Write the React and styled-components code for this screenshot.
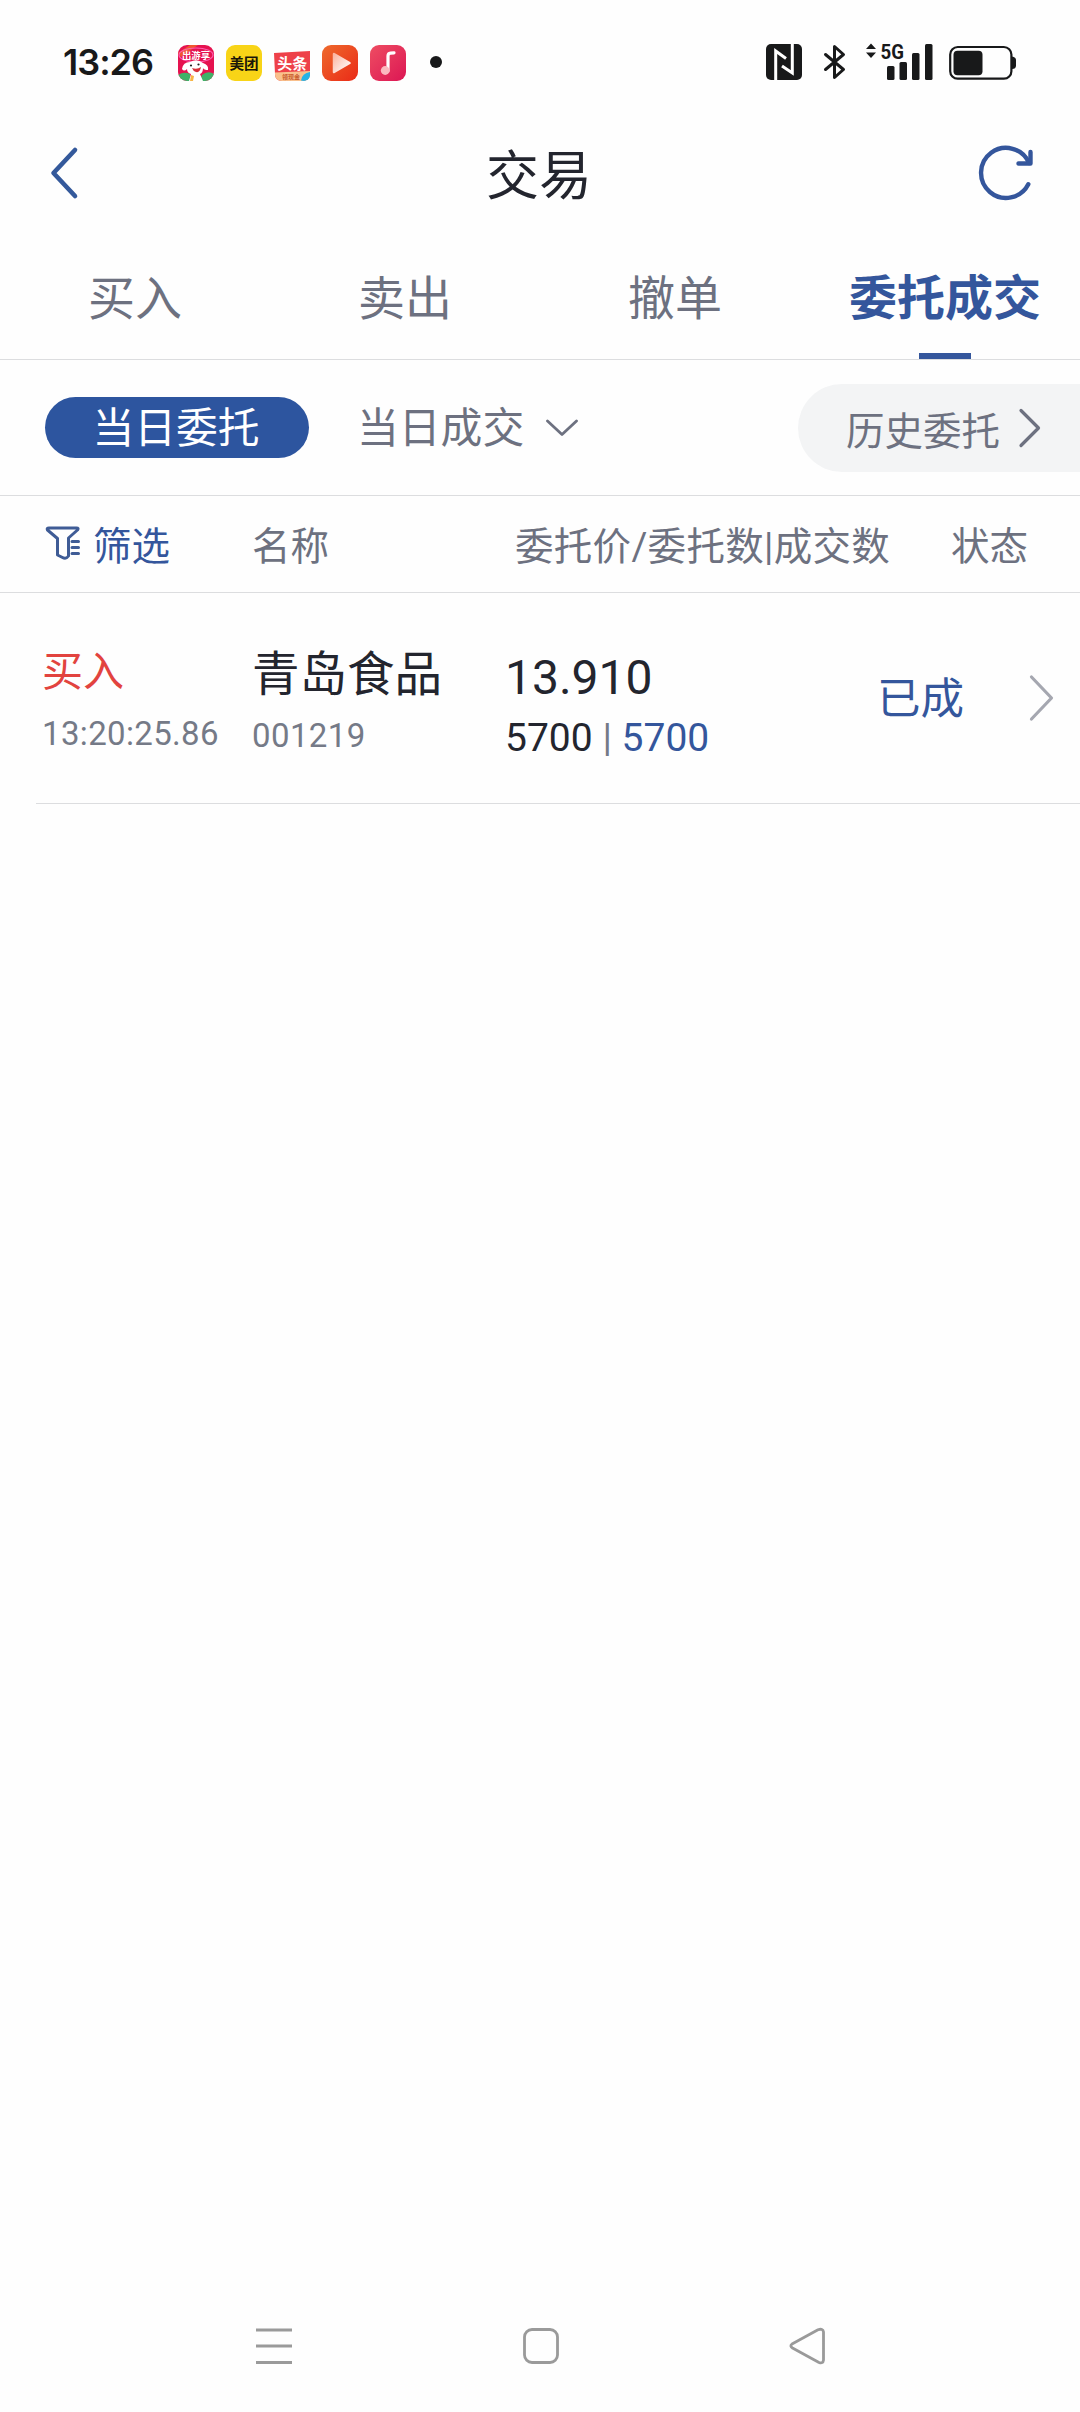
import React from 'react'
import styled, { createGlobalStyle } from 'styled-components'

const tabs = ['买入', '卖出', '撤单', '委托成交']

const orders = [
    {
        side: '买入',
        time: '13:20:25.86',
        name: '青岛食品',
        code: '001219',
        price: '13.910',
        amount: '5700',
        filled: '5700',
        status: '已成',
    },
]

function StatusBar() {
    return (
        <Status>
            <Clock>13:26</Clock>
            <AppIcons>
                <AppIcon viewBox="0 0 36 36">
                    <defs>
                        <clipPath id="tripClip"><rect width="36" height="36" rx="9" /></clipPath>
                    </defs>
                    <g clipPath="url(#tripClip)">
                        <rect width="36" height="36" fill="#e5124f" />
                        <path d="M0 8 L12 0 L20 0 L3 12Z" fill="#f0562f" />
                        <ellipse cx="18" cy="10" rx="17" ry="7" fill="none" stroke="#ff5cae" strokeWidth="1.2" />
                        <path d="M0 30 Q6 26 12 29 L12 36 L0 36Z" fill="#3fb268" />
                        <path d="M24 30 Q30 25 36 29 L36 36 L22 36Z" fill="#3fb268" />
                        <path d="M4 24 Q5 17 12 17 Q19 13 25 18 Q31 20 30 25 Q26 25 25 23 Q25 28 22 29 L25 36 L11 36 L13 29 Q9 28 9 24 Q6 27 4 24Z" fill="#fff" />
                        <path d="M14 23 Q19 25 23 22 Q22 28 18 27 Q15 26 14 23Z" fill="#d92f38" />
                        <circle cx="13" cy="20.5" r="1.1" fill="#222" />
                        <circle cx="20.5" cy="19.5" r="1.1" fill="#222" />
                        <path d="M12 36 L13 30 L16 31 L15 36Z" fill="#f7b545" />
                    </g>
                    <IconText x="18" y="14" fontSize="9.4" fill="#fff">出游享</IconText>
                </AppIcon>
                <AppIcon viewBox="0 0 36 36">
                    <rect width="36" height="36" rx="9" fill="#f8d417" />
                    <IconText x="18" y="23.5" fontSize="14.6" fill="#1a1709">美团</IconText>
                </AppIcon>
                <AppIcon viewBox="0 0 36 36">
                    <path d="M0 8 L36 6 L36 29 Q36 36 28 36 L8 36 Q1 36 1 29Z" fill="#ee4149" />
                    <path d="M1 27.5 L36 26 L36 29 Q36 36 28 36 L8 36 Q1 36 1 29Z" fill="#f9c08c" />
                    <path d="M27 35.5 Q28 28 36 27 Q37 35 30 36Z" fill="#25b3e6" />
                    <IconText x="18.2" y="23.6" fontSize="15" fill="#fff">头条</IconText>
                    <IconText x="17" y="34.3" fontSize="6" fill="#c85a2c">领现金</IconText>
                </AppIcon>
                <AppIcon viewBox="0 0 36 36">
                    <defs>
                        <linearGradient id="videoFill" x1="0" y1="0" x2="1" y2="1">
                            <stop offset="0" stopColor="#ee6a2c" />
                            <stop offset="1" stopColor="#ea2a17" />
                        </linearGradient>
                        <linearGradient id="playFill" x1="0" y1="0" x2="1" y2="1">
                            <stop offset="0" stopColor="#fbb5a0" />
                            <stop offset="1" stopColor="#fff" />
                        </linearGradient>
                    </defs>
                    <rect width="36" height="36" rx="9" fill="url(#videoFill)" />
                    <path d="M12 9 L27.500 18 L12 27Z" fill="url(#playFill)" stroke="url(#playFill)" strokeWidth="2.5" strokeLinejoin="round" />
                </AppIcon>
                <AppIcon viewBox="0 0 36 36">
                    <defs>
                        <linearGradient id="musicFill" x1="0" y1="0" x2="1" y2="1">
                            <stop offset="0" stopColor="#ee4d62" />
                            <stop offset="1" stopColor="#dc1654" />
                        </linearGradient>
                    </defs>
                    <rect width="36" height="36" rx="9" fill="url(#musicFill)" />
                    <path d="M18 26 V11 Q18 8.500 20.500 8.200 L24 7.800" fill="none" stroke="#fff" strokeWidth="3.200" strokeLinecap="round" />
                    <circle cx="15.200" cy="25.500" r="4.400" fill="#fbb9bf" />
                </AppIcon>
            </AppIcons>
            <MoreDot />
            <SystemIcons viewBox="0 -10 252 60">
                <rect x="0" y="2" width="36" height="36" rx="5" fill="#18191a" />
                <path d="M9.700 38 V9 L20 16.500 M26.300 2 V31 L16 24" fill="none" stroke="#fff" strokeWidth="3" />
                <path d="M59.500 12.500 L77.500 27.500 L68.500 35.500 V4.500 L77.500 12.500 L59.500 27.500" fill="none" stroke="#18191a" strokeWidth="3" strokeLinejoin="round" strokeLinecap="round" />
                <path d="M100 7 L105 1.500 L110 7Z M100 10.500 L105 16 L110 10.500Z" fill="#18191a" />
                <NetText x="114.500" y="16.700" textLength="23.500" lengthAdjust="spacingAndGlyphs">5G</NetText>
                <rect x="121" y="24" width="7.500" height="14" rx="1.500" fill="#18191a" />
                <rect x="133.500" y="20" width="7.500" height="18" rx="1.500" fill="#18191a" />
                <rect x="146" y="11" width="7.500" height="27" rx="1.500" fill="#18191a" />
                <rect x="159" y="2" width="7.500" height="36" rx="1.500" fill="#18191a" />
                <rect x="184.200" y="5" width="61.200" height="31.700" rx="7.500" fill="none" stroke="#18191a" strokeWidth="2.200" />
                <rect x="187.500" y="8.700" width="29" height="24.500" rx="4" fill="#18191a" />
                <path d="M246 14.500 Q250 15 250 18 V23.500 Q250 27 246 27Z" fill="#18191a" />
            </SystemIcons>
        </Status>
    )
}

function App() {
    return (
        <Screen>
            <GlobalStyle />
            <StatusBar />
            <Header>
                <BackIcon viewBox="0 0 32 54">
                    <path d="M27 4 L5.500 27 L27 50" />
                </BackIcon>
                <Title>交易</Title>
                <RefreshIcon viewBox="0 0 56 56">
                    <path d="M50.300 39.300 A25 25 0 1 1 51 18" />
                    <path d="M40.500 18.500 H52.500 V7" />
                </RefreshIcon>
            </Header>
            <Tabs>
                {tabs.map(tab => (
                    <Tab key={tab} $active={tab === '委托成交'}>{tab}</Tab>
                ))}
            </Tabs>
            <FilterBar>
                <TodayOrders>当日委托</TodayOrders>
                <TodayDeals>
                    当日成交
                    <DownIcon viewBox="0 0 32 18">
                        <path d="M1.500 2 L16 15.500 L30.500 2" />
                    </DownIcon>
                </TodayDeals>
                <History>
                    <HistoryText>历史委托</HistoryText>
                    <RightIcon viewBox="0 0 24 40" $width={24} $height={40} $color="#6d7180">
                        <path d="M3 2.500 L20.500 20 L3 37.500" />
                    </RightIcon>
                </History>
            </FilterBar>
            <TableHead>
                <FilterButton>
                    <FunnelIcon viewBox="0 0 36 36">
                        <path d="M4 3 H31.500 Q34 3 32.500 5 L23.500 13 V31 Q21 34.500 17.500 32.500 L12.500 30 V13.500 L2.500 5 Q1.500 3 4 3Z" />
                        <path d="M27 16.500 H33.500 M27 22.500 H33.500 M27 28.500 H33.500" />
                    </FunnelIcon>
                    筛选
                </FilterButton>
                <span>名称</span>
                <PriceHead>委托价/委托数|成交数</PriceHead>
                <span>状态</span>
            </TableHead>
            {orders.map(order => (
                <Row key={order.time}>
                    <Cell>
                        <Side>{order.side}</Side>
                        <Time>{order.time}</Time>
                    </Cell>
                    <Cell>
                        <Name>{order.name}</Name>
                        <Code>{order.code}</Code>
                    </Cell>
                    <Cell>
                        <Price>{order.price}</Price>
                        <Amount>
                            {order.amount} <Bar>|</Bar> <Filled>{order.filled}</Filled>
                        </Amount>
                    </Cell>
                    <State>{order.status}</State>
                    <RightIcon viewBox="0 0 26 48" $width={26} $height={48} $color="#a5a7b0">
                        <path d="M3.500 3 L23.500 24 L3.500 45" />
                    </RightIcon>
                </Row>
            ))}
            <NavBar>
                <NavIcon viewBox="0 0 40 40">
                    <path d="M2 4 H38 M2 20 H38 M2 36.500 H38" />
                </NavIcon>
                <NavIcon viewBox="0 0 40 40">
                    <rect x="3.500" y="3.500" width="33" height="33" rx="7.500" />
                </NavIcon>
                <NavIcon viewBox="0 0 40 40">
                    <path d="M4 18 L30 3.800 Q35 2 35.500 6 V34 Q35 38 31 36.500 L4.500 22 Q1.500 20 4 18Z" />
                </NavIcon>
            </NavBar>
        </Screen>
    )
}

export default App

const GlobalStyle = createGlobalStyle`
body {
    margin: 0;
    background: #fefefe;
}
* {
    box-sizing: border-box;
}
`

const Screen = styled.div`
display: flex;
flex-direction: column;
width: 1080px;
height: 2412px;
overflow: hidden;
background: #fefefe;
color: #23252e;
font-family: Roboto, "Noto Sans CJK SC", sans-serif;
white-space: nowrap;
`

const Status = styled.div`
display: flex;
align-items: center;
height: 124px;
padding: 0 62px 0 62px;
`

const Clock = styled.div`
width: 116px;
padding-left: 1px;
font-family: Inter, sans-serif;
font-size: 36px;
font-weight: 600;
line-height: 44px;
letter-spacing: -1px;
color: #18191a;
`

const AppIcons = styled.div`
display: flex;
gap: 12px;
margin-top: 2px;
`

const AppIcon = styled.svg`
width: 36px;
height: 36px;
`

const IconText = styled.text`
font-family: "Noto Sans CJK SC", sans-serif;
font-weight: 700;
text-anchor: middle;
`

const NetText = styled.text`
font-family: Roboto, sans-serif;
font-size: 21px;
font-weight: 700;
fill: #18191a;
`

const MoreDot = styled.div`
width: 12px;
height: 12px;
margin-left: 24px;
border-radius: 50%;
background: #18191a;
`

const SystemIcons = styled.svg`
width: 252px;
height: 60px;
margin-left: auto;
`

const Header = styled.div`
display: flex;
justify-content: space-between;
align-items: center;
height: 98px;
padding: 0 46px 0 48px;
`

const BackIcon = styled.svg`
width: 32px;
height: 54px;
margin-right: 20px;
fill: none;
stroke: #34599b;
stroke-width: 4.6;
stroke-linecap: round;
stroke-linejoin: round;
`

const Title = styled.div`
padding-top: 8px;
font-size: 53px;
line-height: 60px;
`

const RefreshIcon = styled.svg`
width: 56px;
height: 56px;
fill: none;
stroke: #34569c;
stroke-width: 4.4;
stroke-linecap: round;
stroke-linejoin: round;
`

const Tabs = styled.div`
display: grid;
grid-template-columns: repeat(4, 1fr);
height: 138px;
border-bottom: 1px solid #dcdddf;
`

const Tab = styled.div`
display: flex;
flex-direction: column;
align-items: center;
justify-content: space-between;
padding-top: 47px;
font-size: ${props => props.$active ? 48 : 47}px;
line-height: 60px;
font-weight: ${props => props.$active ? 700 : 400};
color: ${props => props.$active ? '#34569c' : '#6d7180'};

&::after {
    content: "";
    width: 52px;
    height: 6px;
    background: ${props => props.$active ? '#34569c' : 'transparent'};
}
`

const FilterBar = styled.div`
display: flex;
align-items: center;
height: 136px;
padding-left: 45px;
border-bottom: 1px solid #dcdddf;
font-size: 41.800px;
color: #6d7180;
`

const TodayOrders = styled.div`
width: 264px;
height: 61px;
padding-right: 2px;
border-radius: 31px;
background: #2d559f;
color: #fff;
text-align: center;
line-height: 63px;
`

const TodayDeals = styled.div`
display: flex;
align-items: center;
gap: 22px;
margin-left: 48px;
padding-top: 2px;
line-height: 63px;
`

const DownIcon = styled.svg`
width: 32px;
height: 18px;
margin-top: -2px;
fill: none;
stroke: #6d7180;
stroke-width: 2.8;
stroke-linecap: round;
stroke-linejoin: round;
`

const History = styled.div`
display: flex;
align-items: center;
justify-content: space-between;
width: 282px;
height: 88px;
margin-left: auto;
padding: 0 38px 0 48px;
border-radius: 44px 0 0 44px;
background: #f3f4f5;
font-size: 38.500px;
`

const HistoryText = styled.div`
padding-top: 1px;
`

const RightIcon = styled.svg`
width: ${props => props.$width}px;
height: ${props => props.$height}px;
fill: none;
stroke: ${props => props.$color};
stroke-width: 3.2;
stroke-linecap: round;
stroke-linejoin: round;
`

const TableHead = styled.div`
display: grid;
grid-template-columns: 207px 263px 436px auto;
align-items: center;
height: 97px;
padding: 0 0 2px 45px;
border-bottom: 1px solid #dcdddf;
font-size: 38.500px;
color: #6d7180;
`

const FilterButton = styled.div`
display: flex;
align-items: center;
gap: 12px;
color: #34569c;
`

const FunnelIcon = styled.svg`
width: 36px;
height: 36px;
fill: none;
stroke: #3f5c96;
stroke-width: 3;
stroke-linecap: round;
stroke-linejoin: round;
`

const PriceHead = styled.div`
letter-spacing: 0.3px;
`

const Row = styled.div`
display: grid;
grid-template-columns: 210px 253px 372px 151px auto;
align-items: center;
height: 211px;
margin-left: 36px;
padding: 0 25px 0 6px;
border-bottom: 1px solid #dcdddf;
`

const Cell = styled.div`
display: flex;
flex-direction: column;
height: 130px;
`

const Side = styled.div`
padding-top: 9px;
font-size: 41px;
line-height: 60px;
color: #e2433f;
`

const Time = styled.div`
padding-top: 2px;
font-size: 33px;
line-height: 60px;
letter-spacing: 0.350px;
color: #757a87;
`

const Name = styled.div`
padding-top: 12px;
font-size: 47.500px;
line-height: 60px;
`

const Code = styled.div`
padding-top: 1px;
font-size: 33px;
line-height: 60px;
letter-spacing: 0.400px;
color: #757a87;
`

const Price = styled.div`
padding-top: 15px;
font-size: 48px;
line-height: 60px;
`

const Amount = styled.div`
font-size: 39px;
line-height: 60px;
`

const Bar = styled.span`
color: #757a87;
`

const Filled = styled.span`
color: #34569c;
`

const State = styled.div`
padding-top: 4px;
font-size: 43.500px;
line-height: 60px;
color: #34569c;
`

const NavBar = styled.div`
display: flex;
justify-content: space-between;
align-items: center;
height: 132px;
margin-top: auto;
padding: 0 252px 0 254px;
`

const NavIcon = styled.svg`
width: 40px;
height: 40px;
fill: none;
stroke: #9a9a9a;
stroke-width: 2.8;
stroke-linejoin: round;
`
